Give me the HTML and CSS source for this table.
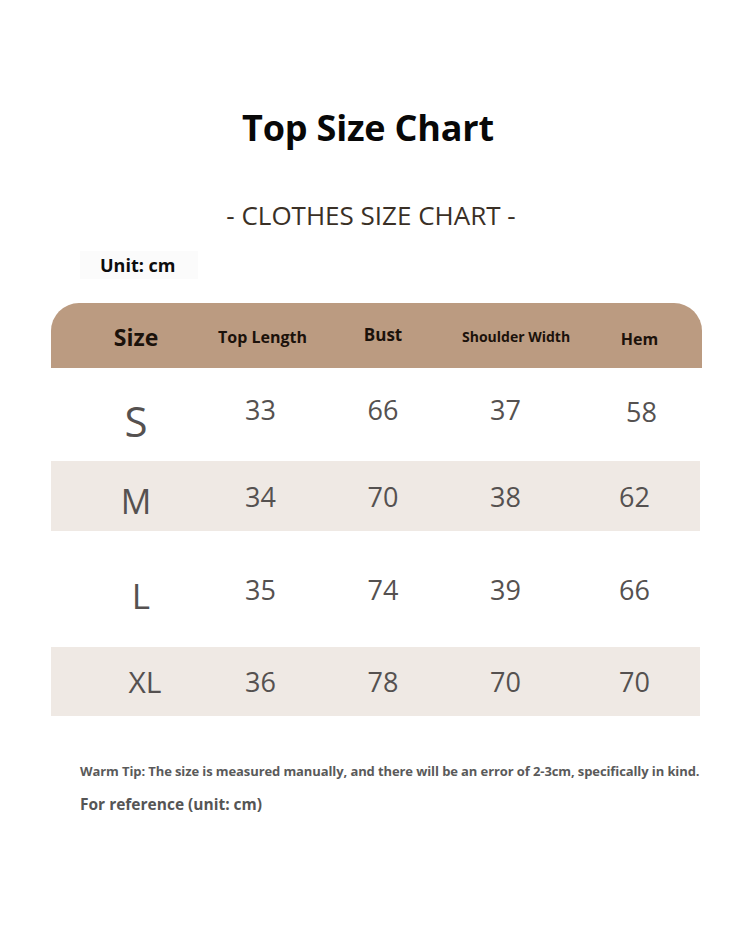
FILE: index.html
```html
<!DOCTYPE html>
<html lang="en">
<head>
<meta charset="utf-8">
<title>Top Size Chart</title>
<link rel="stylesheet" href="styles.css">
</head>
<body>
<main class="page">
  <h1 class="title">Top Size Chart</h1>
  <p class="subtitle">- CLOTHES SIZE CHART -</p>
  <div class="unit">Unit: cm</div>

  <div class="chart">
    <div class="row head">
      <span class="cell size-h">Size</span>
      <span class="cell h-len">Top Length</span>
      <span class="cell h-bust">Bust</span>
      <span class="cell h-sh">Shoulder Width</span>
      <span class="cell h-hem">Hem</span>
    </div>
    <div class="row r-s">
      <span class="cell sz sz-s">S</span>
      <span class="cell num">33</span>
      <span class="cell num">66</span>
      <span class="cell num">37</span>
      <span class="cell num last-s">58</span>
    </div>
    <div class="row r-m shaded">
      <span class="cell sz sz-m">M</span>
      <span class="cell num">34</span>
      <span class="cell num">70</span>
      <span class="cell num">38</span>
      <span class="cell num">62</span>
    </div>
    <div class="row r-l">
      <span class="cell sz sz-l">L</span>
      <span class="cell num">35</span>
      <span class="cell num">74</span>
      <span class="cell num">39</span>
      <span class="cell num">66</span>
    </div>
    <div class="row r-xl shaded">
      <span class="cell sz sz-xl">XL</span>
      <span class="cell num">36</span>
      <span class="cell num">78</span>
      <span class="cell num">70</span>
      <span class="cell num">70</span>
    </div>
  </div>

  <p class="tip">Warm Tip: The size is measured manually, and there will be an error of 2-3cm, specifically in kind.</p>
  <p class="ref">For reference (unit: cm)</p>
</main>
</body>
</html>
```

FILE: styles.css
```css
html, body {
  margin: 0;
  padding: 0;
  background: #ffffff;
}

.page {
  width: 750px;
  height: 950px;
  display: flex;
  flex-direction: column;
  font-family: "Open Sans", "Noto Sans", sans-serif;
  color: #111;
}

.title {
  margin: 0;
  padding: 106px 14px 0 0;
  font-size: 36px;
  line-height: 44px;
  font-weight: 700;
  text-align: center;
  color: #080808;
  letter-spacing: -0.2px;
}

.subtitle {
  margin: 50px 0 0;
  padding-right: 8px;
  font-size: 26px;
  line-height: 30px;
  font-weight: 400;
  text-align: center;
  color: #3a3026;
}

.unit {
  align-self: flex-start;
  margin: 21px 0 0 80px;
  width: 98px;
  height: 28px;
  padding-left: 20px;
  background: #fbfbfb;
  font-size: 18px;
  line-height: 28px;
  font-weight: 700;
  color: #0d0d0d;
}

.chart {
  margin: 24px 0 0 51px;
  width: 651px;
  display: flex;
  flex-direction: column;
}

.row {
  display: grid;
  grid-template-columns: 148px 123px 122px 123px 135px;
  align-items: center;
}

.cell {
  text-align: center;
  white-space: nowrap;
}

.head {
  height: 65px;
  background: #bb9b81;
  border-radius: 28px 28px 0 0;
  font-weight: 700;
  color: #1b120b;
}

.size-h {
  font-size: 23px;
  padding-left: 22px;
  padding-top: 2px;
}

.h-len {
  font-size: 16px;
  padding-left: 4px;
  padding-top: 2px;
}

.h-bust {
  font-size: 17px;
  padding-bottom: 3px;
}

.h-sh {
  font-size: 14px;
  padding-left: 18px;
  padding-top: 2px;
}

.h-hem {
  font-size: 16px;
  padding-left: 10px;
  padding-top: 7px;
}

.r-s { height: 93px; }
.r-m { height: 70px; }
.r-l { height: 116px; }
.r-xl { height: 69px; }

.shaded {
  background: #efe9e4;
  width: 649px;
}

.num {
  font-size: 27px;
  font-weight: 400;
  color: #555150;
}

.sz {
  font-weight: 400;
  color: #555150;
  padding-left: 22px;
}

.r-s .num { padding-bottom: 10px; }
.r-s .last-s { padding-bottom: 6px; padding-left: 14px; }
.sz-s { font-size: 42px; padding-top: 12px; }
.sz-m { font-size: 34px; padding-top: 10px; }
.sz-l { font-size: 35px; padding-top: 12px; padding-left: 32px; }
.sz-xl { font-size: 30px; padding-left: 40px; }

.tip {
  margin: 46px 0 0 80px;
  font-size: 13px;
  line-height: 18px;
  font-weight: 700;
  color: #5a5a5a;
  letter-spacing: -0.1px;
}

.ref {
  margin: 13px 0 0 80px;
  font-size: 15.5px;
  line-height: 22px;
  font-weight: 700;
  color: #555;
}
```
